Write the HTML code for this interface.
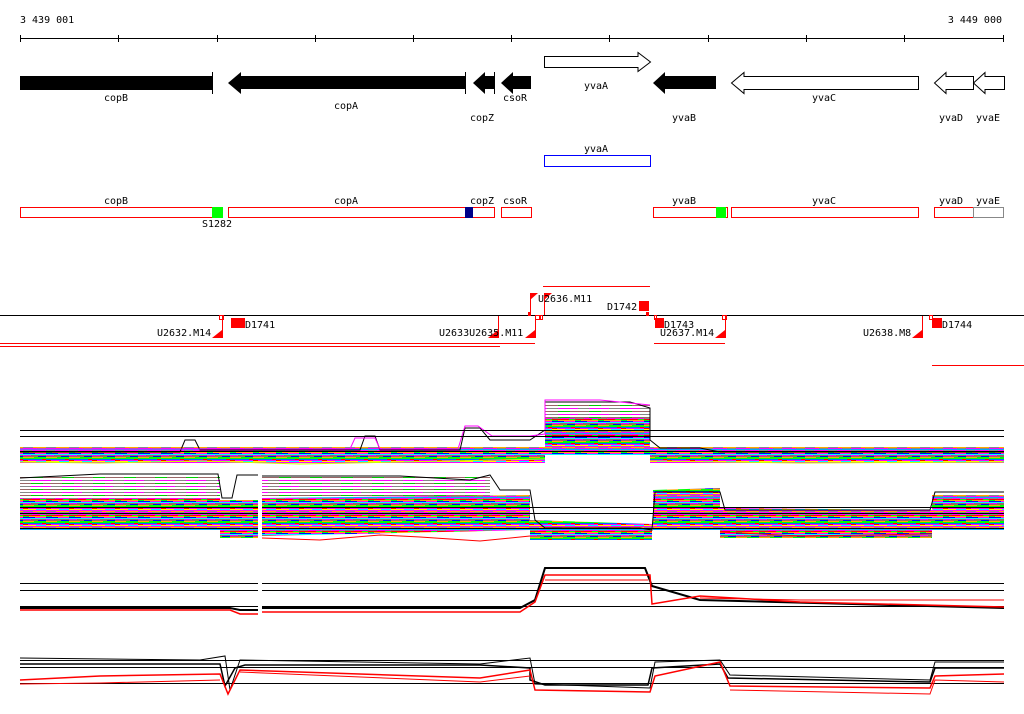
<!DOCTYPE html>
<html><head><meta charset="utf-8"><style>
html,body{margin:0;padding:0;background:#fff;}
svg{display:block}
text{font-family:"DejaVu Sans Mono","Liberation Mono",monospace;font-size:10px;fill:#000}
</style></head><body>
<svg width="1024" height="714" viewBox="0 0 1024 714" xmlns="http://www.w3.org/2000/svg">
<defs>
<pattern id="st" width="23" height="16" patternUnits="userSpaceOnUse">
<rect width="23" height="16" fill="#fff"/>
<rect y="0" width="14" height="1" fill="#f0f"/><rect x="14" y="0" width="9" height="1" fill="#888"/>
<rect y="1" width="23" height="1" fill="#0af"/>
<rect y="2" width="9" height="1" fill="#888"/><rect x="9" y="2" width="14" height="1" fill="#f0f"/>
<rect y="3" width="17" height="1" fill="#f00"/><rect x="17" y="3" width="6" height="1" fill="#0f0"/>
<rect y="4" width="6" height="1" fill="#0f0"/><rect x="6" y="4" width="17" height="1" fill="#fa0"/>
<rect y="5" width="12" height="1" fill="#00f"/><rect x="12" y="5" width="11" height="1" fill="#f0f"/>
<rect y="6" width="23" height="1" fill="#0ff"/>
<rect y="7" width="8" height="1" fill="#f0f"/><rect x="8" y="7" width="15" height="1" fill="#966"/>
<rect y="8" width="15" height="1" fill="#966"/><rect x="15" y="8" width="8" height="1" fill="#00f"/>
<rect y="9" width="11" height="1" fill="#fa0"/><rect x="11" y="9" width="12" height="1" fill="#0f0"/>
<rect y="10" width="23" height="1" fill="#0f0"/>
<rect y="11" width="19" height="1" fill="#06f"/><rect x="19" y="11" width="4" height="1" fill="#f00"/>
<rect y="12" width="5" height="1" fill="#f00"/><rect x="5" y="12" width="18" height="1" fill="#f0f"/>
<rect y="13" width="13" height="1" fill="#ff0"/><rect x="13" y="13" width="10" height="1" fill="#0ff"/>
<rect y="14" width="23" height="1" fill="#f0f"/>
<rect y="15" width="10" height="1" fill="#888"/><rect x="10" y="15" width="13" height="1" fill="#fa0"/>
</pattern>
<pattern id="sp" width="31" height="6" patternUnits="userSpaceOnUse">
<rect width="31" height="6" fill="#fff"/>
<rect y="0" width="20" height="1" fill="#f0f"/><rect x="20" y="0" width="11" height="1" fill="#888"/>
<rect y="3" width="12" height="1" fill="#0c0"/><rect x="12" y="3" width="19" height="1" fill="#966"/>
</pattern>
</defs>

<text x="20" y="23">3 439 001</text>
<text x="1002" y="23" text-anchor="end">3 449 000</text>
<g stroke="#000" stroke-width="1">
<line x1="20" y1="38.5" x2="1004" y2="38.5"/>
<path d="M20.5 35v7M118.5 35v7M217.5 35v7M315.5 35v7M413.5 35v7M511.5 35v7M609.5 35v7M708.5 35v7M806.5 35v7M904.5 35v7M1003.5 35v7"/>
</g>

<rect x="20" y="76" width="192" height="14" fill="#000"/>
<line x1="212.5" y1="72" x2="212.5" y2="94" stroke="#000"/>
<polygon points="228,83 241,72 241,76 465,76 465,89 241,89 241,94" fill="#000"/>
<line x1="465.5" y1="72" x2="465.5" y2="94" stroke="#000"/>
<polygon points="473,83 485,72 485,76 494,76 494,89 485,89 485,94" fill="#000"/>
<line x1="494.5" y1="72" x2="494.5" y2="94" stroke="#000"/>
<polygon points="501,83 513,72 513,76 531,76 531,89 513,89 513,94" fill="#000"/>
<polygon points="544.5,56.5 638,56.5 638,52.5 650.5,62 638,71.5 638,67.5 544.5,67.5" fill="#fff" stroke="#000"/>
<polygon points="653,83 665,72 665,76 716,76 716,89 665,89 665,94" fill="#000"/>
<polygon points="731.5,83 744,72.5 744,76.5 918.5,76.5 918.5,89.5 744,89.5 744,93.5" fill="#fff" stroke="#000"/>
<polygon points="934.5,83 946,72.5 946,76.5 973.5,76.5 973.5,89.5 946,89.5 946,93.5" fill="#fff" stroke="#000"/>
<polygon points="973.5,83 985,72.5 985,76.5 1004.5,76.5 1004.5,89.5 985,89.5 985,93.5" fill="#fff" stroke="#000"/>
<g text-anchor="middle">
<text x="116" y="101">copB</text><text x="346" y="109">copA</text><text x="482" y="121">copZ</text>
<text x="515" y="101">csoR</text><text x="596" y="89">yvaA</text><text x="684" y="121">yvaB</text>
<text x="824" y="101">yvaC</text><text x="951" y="121">yvaD</text><text x="988" y="121">yvaE</text>
<text x="596" y="152">yvaA</text>
<text x="116" y="204">copB</text><text x="346" y="204">copA</text><text x="482" y="204">copZ</text>
<text x="515" y="204">csoR</text><text x="684" y="204">yvaB</text><text x="824" y="204">yvaC</text>
<text x="951" y="204">yvaD</text><text x="988" y="204">yvaE</text>
<text x="217" y="227">S1282</text>
</g>
<rect x="544.5" y="155.5" width="106" height="11" fill="none" stroke="#00f"/>

<g fill="none" stroke="#f00">
<rect x="20.5" y="207.5" width="192" height="10"/>
<rect x="228.5" y="207.5" width="266" height="10"/>
<rect x="501.5" y="207.5" width="30" height="10"/>
<rect x="653.5" y="207.5" width="74" height="10"/>
<rect x="731.5" y="207.5" width="187" height="10"/>
<rect x="934.5" y="207.5" width="39" height="10"/>
</g>
<rect x="973.5" y="207.5" width="30" height="10" fill="none" stroke="#888"/>
<rect x="212" y="207" width="11" height="11" fill="#0f0"/>
<rect x="465" y="207" width="8" height="11" fill="#008"/>
<rect x="716" y="207" width="10" height="11" fill="#0f0"/>

<line x1="0" y1="315.5" x2="1024" y2="315.5" stroke="#000"/>
<g stroke="#f00" fill="none">
<line x1="0" y1="343.5" x2="222" y2="343.5"/>
<line x1="0" y1="346.5" x2="500" y2="346.5"/>
<line x1="222" y1="343.5" x2="535" y2="343.5"/>
<line x1="543" y1="286.5" x2="650" y2="286.5"/>
<line x1="654" y1="343.5" x2="725" y2="343.5"/>
<line x1="932" y1="365.5" x2="1024" y2="365.5"/>
<path d="M222.5 316v22M498.5 316v22M535.5 316v22M530.5 293v22M544.5 293v22M725.5 316v22M922.5 316v22"/>
<rect x="219.5" y="315.5" width="4" height="4"/><rect x="535.5" y="315.5" width="4" height="4"/>
<rect x="540.5" y="315.5" width="2" height="4"/><rect x="654.5" y="315.5" width="2" height="4"/>
<rect x="722.5" y="315.5" width="4" height="4"/><rect x="929.5" y="315.5" width="3" height="4"/>
</g>
<g fill="#f00">
<polygon points="212,338 222,338 222,330"/><polygon points="488,338 498,338 498,330"/>
<polygon points="525,338 535,338 535,330"/><polygon points="530,293 538,293 530,300"/>
<polygon points="544,293 552,293 544,300"/><polygon points="715,338 725,338 725,330"/>
<polygon points="912,338 922,338 922,330"/>
<rect x="231" y="318" width="14" height="10"/><rect x="639" y="301" width="10" height="10"/>
<rect x="655" y="318" width="9" height="10"/><rect x="932" y="318" width="10" height="10"/>
<rect x="528" y="312" width="3" height="4"/><rect x="646" y="312" width="3" height="4"/>
</g>
<text x="157" y="336">U2632.M14</text><text x="245" y="328">D1741</text>
<text x="439" y="336">U2633U2635.M11</text><text x="538" y="302">U2636.M11</text>
<text x="607" y="310">D1742</text><text x="664" y="328">D1743</text>
<text x="660" y="336">U2637.M14</text><text x="863" y="336">U2638.M8</text><text x="942" y="328">D1744</text>

<!-- plot 1 -->
<polygon fill="url(#st)" points="20,447 1004,447 1004,463 650,463 650,455 545,455 545,463 20,463"/>
<polygon fill="url(#sp)" points="545,404 650,404 650,418 545,418"/>
<polygon fill="url(#st)" points="545,418 650,418 650,448 545,448"/>
<path fill="none" stroke="#000" d="M20 452 H180 L185 440 H195 L200 450 H360 L365 436 H375 L380 450 H460 L465 428 H480 L490 440 H530 L545 430 V402 H630 L650 408 V440 L660 448 H700 L720 452 H1004"/>
<path fill="none" stroke="#f0f" d="M20 449 H350 L355 438 H375 L380 449 H458 L465 426 H478 L492 436 H530 L545 434 V400 H600 L650 405"/>
<path fill="none" stroke="#cf0" d="M20 462 L100 463 L200 461 L300 464 L400 462 L545 459 M650 461 L800 463 L1004 462"/>
<g stroke="#000"><line x1="20" y1="430.5" x2="1004" y2="430.5"/><line x1="20" y1="436.5" x2="1004" y2="436.5"/><line x1="20" y1="451.5" x2="1004" y2="451.5"/></g>

<!-- plot 2 -->
<polygon fill="url(#sp)" points="20,475 220,475 220,498 20,498"/>
<polygon fill="url(#st)" points="20,498 220,498 220,530 20,530"/>
<polygon fill="url(#st)" points="220,500 258,500 258,538 220,538"/>
<polygon fill="url(#sp)" points="262,477 490,477 490,498 262,498"/>
<polygon fill="url(#st)" points="262,498 530,495 530,530 262,536"/>
<polygon fill="url(#st)" points="530,520 652,524 652,540 530,540"/>
<polygon fill="url(#st)" points="653,490 720,488 720,530 653,530"/>
<polygon fill="url(#st)" points="720,508 932,510 932,538 720,538"/>
<polygon fill="url(#st)" points="932,495 1004,495 1004,530 932,530"/>
<path fill="none" stroke="#000" d="M20 478 L100 474 H218 L222 498 H232 L237 475 H258 M262 476 H400 L470 480 L490 475 L500 490 H530 L535 520 L545 528 H640 L652 530 L655 492 H720 L725 510 H930 L935 492 H1004"/>
<path fill="none" stroke="#f00" d="M262 538 L320 540 L380 535 L420 537 L480 541 L530 536 M720 532 L800 536 L932 534"/>
<g stroke="#000"><line x1="20" y1="507.5" x2="1004" y2="507.5"/><line x1="20" y1="513.5" x2="1004" y2="513.5"/><line x1="20" y1="528.5" x2="1004" y2="528.5"/></g>
<rect x="258" y="470" width="4" height="75" fill="#fff"/>

<!-- plot 3 -->
<g stroke="#000"><line x1="20" y1="583.5" x2="1004" y2="583.5"/><line x1="20" y1="590.5" x2="1004" y2="590.5"/><line x1="20" y1="606.5" x2="1004" y2="606.5"/></g>
<path fill="none" stroke="#000" stroke-width="2" d="M20 608 H230 L240 610 H258 M262 608 H520 L535 600 L545 568 H645 L652 586 L700 600 L1004 608"/>
<path fill="none" stroke="#f00" stroke-width="1.5" d="M20 610 H230 L240 614 H258 M262 612 H520 L535 602 L545 575 H650 L652 604 L700 596 L800 602 L1004 607"/>
<path fill="none" stroke="#f00" d="M545 580 H648 M700 598 L800 600 H1004"/>
<rect x="258" y="575" width="4" height="45" fill="#fff"/>

<!-- plot 4 -->
<g stroke="#000"><line x1="20" y1="660.5" x2="1004" y2="660.5"/><line x1="20" y1="667.5" x2="1004" y2="667.5"/><line x1="20" y1="683.5" x2="1004" y2="683.5"/></g>
<path fill="none" stroke="#000" stroke-width="1.5" d="M20 664 H220 L225 686 L235 668 L245 665 H480 L530 668 V680 L545 685 H648 L652 668 L720 664 L728 678 L930 682 L935 668 H1004"/>
<path fill="none" stroke="#000" d="M20 658 L200 660 L225 656 L230 690 L240 660 L480 664 L530 658 L535 684 L650 688 L655 662 L720 660 L730 675 L930 680 L935 662 H1004"/>
<path fill="none" stroke="#f00" stroke-width="1.5" d="M20 680 L100 676 L220 674 L228 694 L240 670 L480 678 L530 670 L535 690 L650 692 L655 676 L720 662 L730 686 L930 688 L935 676 L1004 674"/>
<path fill="none" stroke="#f00" d="M20 684 L100 683 L220 680 M240 672 L480 682 L530 676 M730 690 L930 694 L935 680 L1004 682"/>
</svg>
</body></html>
